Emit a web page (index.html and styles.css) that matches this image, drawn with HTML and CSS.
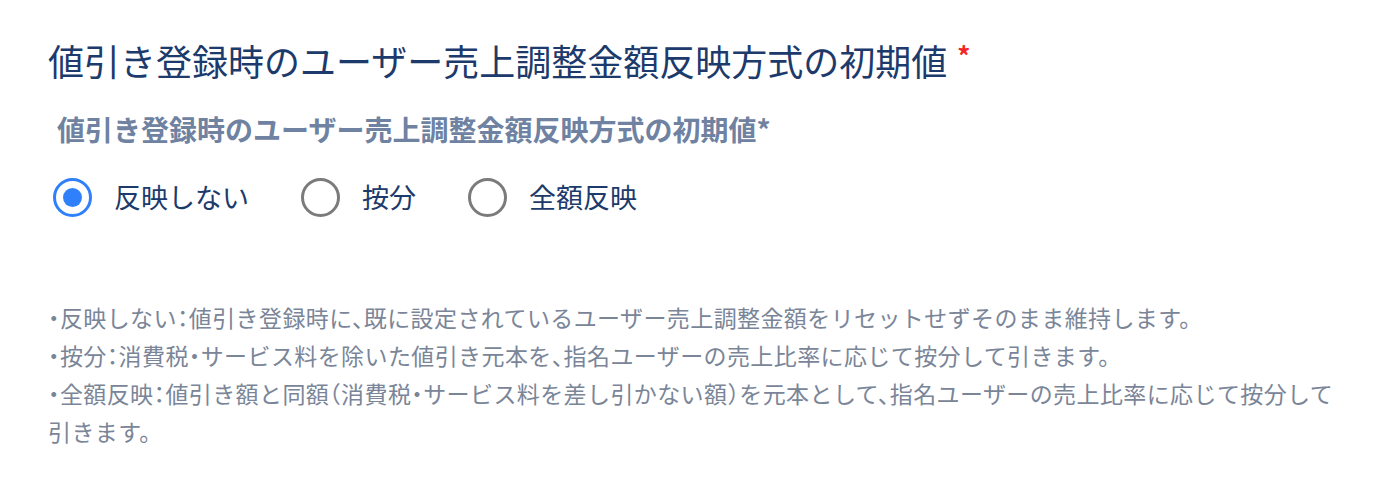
FILE: index.html
```html
<!DOCTYPE html>
<html lang="ja">
<head>
  <meta charset="UTF-8" />
  <meta name="viewport" content="width=device-width, initial-scale=1.0"/>
  <title>値引き設定</title>
  <link rel="stylesheet" href="styles.css">
</head>
<body>
  <section class="setting">
    <h2 class="setting-title">値引き登録時のユーザー売上調整金額反映方式の初期値<span class="required">*</span></h2>

    <div class="field">
      <div class="field-label">値引き登録時のユーザー売上調整金額反映方式の初期値*</div>
      <div class="radio-group">
        <label class="radio">
          <input type="radio" name="adjustMode" value="none" checked />
          <span>反映しない</span>
        </label>
        <label class="radio">
          <input type="radio" name="adjustMode" value="split" />
          <span>按分</span>
        </label>
        <label class="radio">
          <input type="radio" name="adjustMode" value="full" />
          <span>全額反映</span>
        </label>
      </div>
    </div>

    <div class="help">
      <p>・反映しない：値引き登録時に、既に設定されているユーザー売上調整金額をリセットせずそのまま維持します。</p>
      <p>・按分：消費税・サービス料を除いた値引き元本を、指名ユーザーの売上比率に応じて按分して引きます。</p>
      <p>・全額反映：値引き額と同額（消費税・サービス料を差し引かない額）を元本として、指名ユーザーの売上比率に応じて按分して引きます。</p>
    </div>
  </section>
</body>
</html>
```

FILE: styles.css
```css
:root {
  --navy: #1c3a6b;
  --label-color: #6f82a2;
  --help-color: #7a8598;
  --accent: #2f80fa;
  --radio-off: #7b7b7b;
}

body {
  margin: 0;
  background: #fff;
  font-family: "Noto Sans CJK JP", "Noto Sans", sans-serif;
  color: var(--navy);
}

.setting {
  padding: 35px 48px 30px;
}

.setting-title {
  margin: 0;
  font-size: 36px;
  font-weight: 400;
  line-height: 50px;
  color: var(--navy);
}

.required {
  color: #f42424;
  font-size: 26px;
  font-weight: 700;
  margin-left: 10px;
  vertical-align: top;
  line-height: 40px;
}

.field {
  margin-top: 24px;
}

.field-label {
  padding-left: 9px;
  font-size: 28px;
  font-weight: 700;
  line-height: 40px;
  color: var(--label-color);
}

.radio-group {
  display: flex;
  gap: 52px;
  margin-top: 28px;
  padding-left: 5px;
}

.radio {
  display: flex;
  align-items: center;
  gap: 22px;
  font-size: 27px;
  line-height: 40px;
  cursor: pointer;
}

.radio input {
  appearance: none;
  margin: 0;
  width: 39px;
  height: 39px;
  border: 3.5px solid var(--radio-off);
  border-radius: 50%;
  box-sizing: border-box;
  display: grid;
  place-items: center;
}

.radio input:checked {
  border-color: var(--accent);
}

.radio input:checked::after {
  content: "";
  width: 19px;
  height: 19px;
  border-radius: 50%;
  background: var(--accent);
}

/* punctuation set at half width, kana/kanji stay full width */
.help {
  margin-top: 81px;
  font-size: 23px;
  letter-spacing: 0.4px;
  line-height: 38px;
  color: var(--help-color);
  font-feature-settings: "halt";
}

.help p {
  margin: 0;
}
```
